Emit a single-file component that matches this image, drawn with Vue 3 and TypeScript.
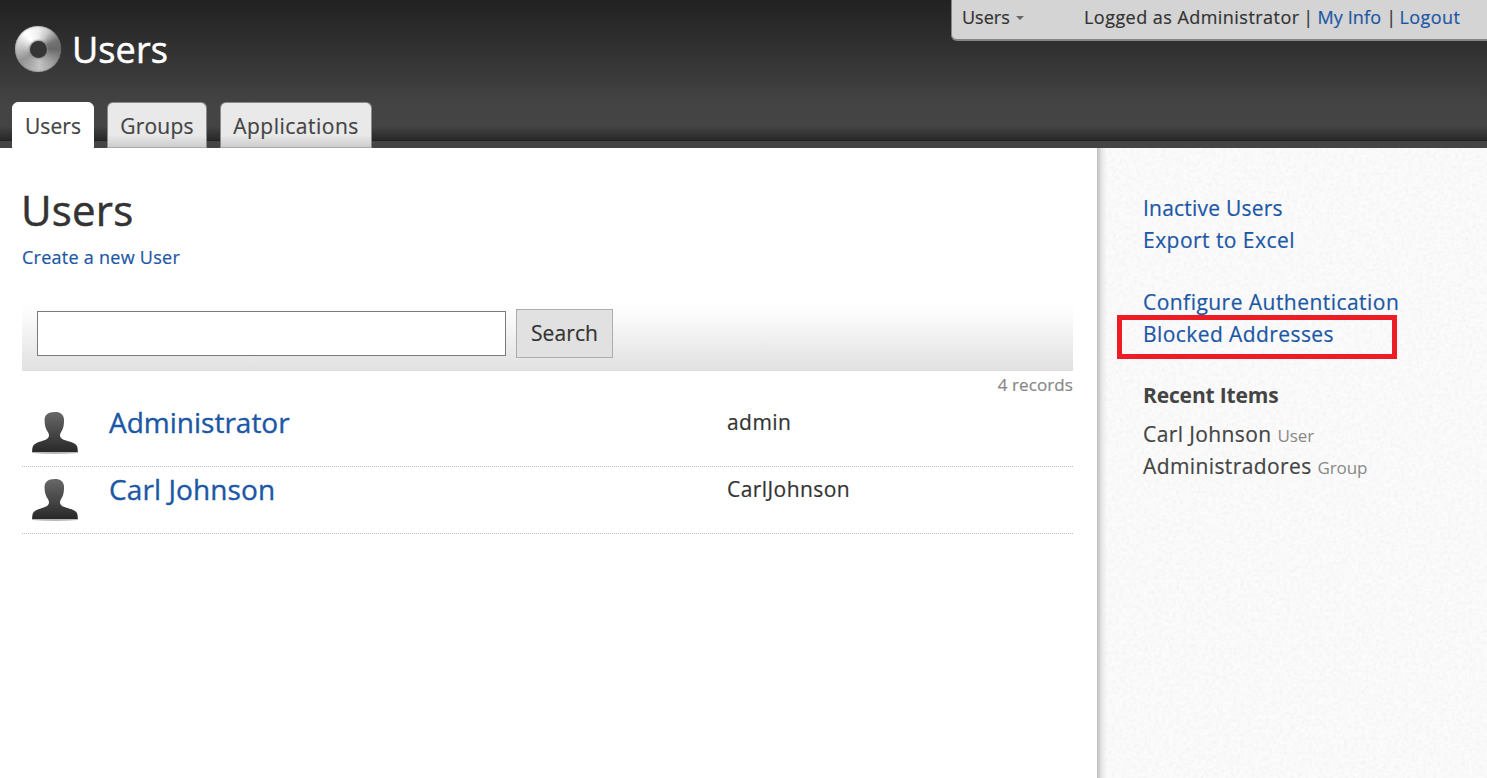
<script setup lang="ts">
interface Account { name: string; login: string; cls: string }
interface RecentItem { name: string; kind: string }

const tabs: string[] = ['Users', 'Groups', 'Applications']
const accounts: Account[] = [
  { name: 'Administrator', login: 'admin', cls: 'snug' },
  { name: 'Carl Johnson', login: 'CarlJohnson', cls: '' },
]
const linkGroups: string[][] = [
  ['Inactive Users', 'Export to Excel'],
  ['Configure Authentication', 'Blocked Addresses'],
]
const recent: RecentItem[] = [
  { name: 'Carl Johnson', kind: 'User' },
  { name: 'Administradores', kind: 'Group' },
]
</script>

<template>
  <div class="page">
    <header class="header">
      <div class="brand">
        <div class="ring"><div class="hole"></div></div>
        <span class="brand-name">Users</span>
      </div>
      <div class="userbar">
        <span class="switcher">Users</span>
        <svg class="caret" width="8" height="4" viewBox="0 0 8 4"><path d="M0 0H8L4 4Z" fill="#666" /></svg>
        <span class="session">Logged as Administrator<i>|</i><a class="info">My Info</a><i>|</i><a class="out">Logout</a></span>
      </div>
      <nav class="tabs">
        <a v-for="(tab, i) in tabs" :key="tab" class="tab" :class="['tab-' + i, { active: i === 0 }]">{{ tab }}</a>
      </nav>
    </header>

    <div class="body">
      <main class="main">
        <h1>Users</h1>
        <a class="create">Create a new User</a>
        <div class="searchbar">
          <input class="query" type="text" />
          <button class="go" type="button">Search</button>
        </div>
        <div class="count">4 records</div>
        <div v-for="a in accounts" :key="a.login" class="row">
          <svg class="avatar" width="50" height="48" viewBox="0 0 50 48">
            <defs>
              <linearGradient :id="'g' + a.login" x1="0" y1="0" x2="0" y2="1">
                <stop offset="0" stop-color="#686868" />
                <stop offset="1" stop-color="#292929" />
              </linearGradient>
            </defs>
            <path d="M2 41.5H48V43Q25 45 2 43Z" fill="#000" opacity=".28" />
            <path
              d="M24.5 2C30 1.7 33.7 4.2 34 9.5C34.2 15 33.4 19 30.8 22.6C29.8 25 29.8 26 30.5 27.2C32 30.5 39.5 30.8 44.3 33.4C47.3 35.1 47.8 37 47.8 42H2.2C2.2 37 2.7 35.1 5.7 33.4C10.5 30.8 17 30.5 18.5 27.2C19.2 26 19.2 25 18.2 22.6C15.6 19 14.4 15 14.6 9.5C14.8 4.4 18.5 2.2 24.5 2Z"
              :fill="'url(#g' + a.login + ')'"
            />
          </svg>
          <a class="name" :class="a.cls">{{ a.name }}</a>
          <span class="login">{{ a.login }}</span>
        </div>
      </main>

      <aside class="side">
        <svg class="grain" width="389" height="630">
          <filter id="grain" x="0" y="0" width="100%" height="100%">
            <feTurbulence type="fractalNoise" baseFrequency="0.28" numOctaves="3" seed="4" />
            <feColorMatrix type="matrix" values="0 0 0 0 0.8  0 0 0 0 0.8  0 0 0 0 0.8  0.7 0 0 0 -0.26" />
          </filter>
          <rect width="389" height="630" filter="url(#grain)" />
        </svg>
        <div class="side-content">
          <div v-for="(group, g) in linkGroups" :key="g" class="links">
            <a v-for="link in group" :key="link" :class="{ marked: link === 'Blocked Addresses', tight: link === 'Inactive Users' }">{{ link }}</a>
          </div>
          <h2>Recent Items</h2>
          <div v-for="item in recent" :key="item.name" class="recent">
            {{ item.name }} <small>{{ item.kind }}</small>
          </div>
        </div>
      </aside>
    </div>
  </div>
</template>

<style>
body { margin: 0; overflow: hidden; }
</style>

<style scoped>
.page {
  width: 1487px;
  height: 778px;
  display: flex;
  flex-direction: column;
  background: #fff;
  color: #333;
  font-family: "Open Sans", "Noto Sans", sans-serif;
  font-size: 21px;
  letter-spacing: 0.46px;
  -webkit-text-stroke: 0.2px;
}
a { color: #1c57a5; text-decoration: none; }
.header {
  box-sizing: border-box;
  height: 148px;
  flex: none;
  display: grid;
  grid-template: 102px 46px / 951px 536px;
  background:
    linear-gradient(#222, #222) 0 140px / 100% 1px no-repeat,
    linear-gradient(#444, #444) 0 141px / 100% 7px no-repeat,
    linear-gradient(#222 0, #252525 12px, #444 105px, #444 126px, #262626 141px);
}
.brand { display: flex; align-items: flex-start; padding: 26px 0 0 15px; }
.ring {
  width: 46px;
  height: 46px;
  border-radius: 50%;
  display: flex;
  align-items: center;
  justify-content: center;
  background: conic-gradient(from 0deg, #f0f0f0 0, #c8c8c8 30deg, #747474 65deg, #686868 90deg, #a0a0a0 135deg, #c4c4c4 175deg, #aaa 205deg, #949494 235deg, #c4c4c4 275deg, #fff 320deg, #f0f0f0 360deg);
  box-shadow: inset 0 0 2px #777, 0 0 1px #777;
}
.hole { width: 17px; height: 17px; border-radius: 50%; background: #353535; box-shadow: 0 0 2px 1px #888; }
.brand-name { margin: -1px 0 0 11px; font-size: 36px; line-height: 50px; letter-spacing: 0.1px; color: #fff; -webkit-text-stroke: 0.5px; }
.userbar {
  box-sizing: border-box;
  height: 41px;
  display: flex;
  align-items: flex-start;
  padding: 5px 0 0 10px;
  border: solid #858585;
  border-width: 0 0 2px 1px;
  border-bottom-left-radius: 6px;
  background: #d4d4d4;
  font-size: 18px;
  line-height: 25px;
  letter-spacing: 0.46px;
  white-space: nowrap;
}
.switcher { width: 54px; letter-spacing: 0; }
.caret { margin-top: 11px; }
.session { display: flex; margin-left: 60px; }
.session i { width: 18px; text-align: center; font-style: normal; }
.session .info { width: 65px; letter-spacing: 0.1px; }
.session .out { margin-left: -1px; letter-spacing: 0.4px; }
.tabs { grid-column: 1 / 3; display: flex; gap: 13px; padding-left: 12px; }
.tab {
  box-sizing: border-box;
  height: 46px;
  border: 1px solid #8a8a8a;
  border-bottom-color: #aaa;
  border-radius: 6px 6px 0 0;
  background: linear-gradient(#e9e9e9 0, #e9e9e9 32px, #cacaca 45px);
  color: #444;
  line-height: 46px;
  text-align: center;
}
.tab-0 { width: 82px; letter-spacing: 0.1px; }
.tab-1 { width: 100px; letter-spacing: 0.2px; }
.tab-2 { width: 152px; letter-spacing: 0.5px; }
.tab.active { background: #fff; border-color: #fff; }
.body { flex: 1; display: flex; }
.main { box-sizing: border-box; width: 1097px; padding: 32px 24px 0 22px; }
h1 { margin: 0 0 0 -1px; font-size: 42px; line-height: 60px; font-weight: 400; letter-spacing: 0.2px; -webkit-text-stroke: 0.5px; }
.create { display: block; margin-top: 4px; font-size: 18px; line-height: 26px; letter-spacing: 0.26px; }
.searchbar {
  box-sizing: border-box;
  height: 71px;
  margin-top: 30px;
  padding: 9px 0 0 15px;
  display: flex;
  gap: 10px;
  background: linear-gradient(#fff, #fafafa 25%, #e0e0e0);
}
.query { box-sizing: border-box; width: 469px; height: 45px; margin: 2px 0 0; border: 1px solid #7a7a7a; background: #fff; }
.go {
  box-sizing: border-box;
  width: 97px;
  height: 49px;
  padding: 0 0 1px;
  border: 1px solid #adadad;
  background: #e1e1e1;
  color: #333;
  font: inherit;
  letter-spacing: 0.1px;
}
.count { height: 29px; line-height: 28px; text-align: right; font-size: 17px; letter-spacing: 0.1px; color: #888; }
.row { box-sizing: border-box; height: 67px; display: flex; border-bottom: 1px dotted #bbb; }
.avatar { margin: 10px 29px 0 8px; flex: none; }
.name { width: 618px; font-size: 28px; line-height: 44px; letter-spacing: 0.1px; -webkit-text-stroke: 0.35px; }
.name.snug { letter-spacing: 0; }
.login { line-height: 45px; letter-spacing: 0.44px; }
.side { position: relative; width: 389px; margin-left: 1px; background: #fbfbfb; }
.grain { position: absolute; inset: 0; display: block; }
.side-content {
  position: relative;
  box-sizing: border-box;
  height: 100%;
  margin-left: -1px;
  padding: 45px 0 0 46px;
  background: linear-gradient(90deg, #bebebe 0, #cecece 2px, rgba(225, 225, 225, 0.7) 5px, rgba(250, 250, 250, 0) 10px);
}
.links { display: flex; flex-direction: column; align-items: flex-start; margin-bottom: 31px; line-height: 31.5px; }
.tight { letter-spacing: 0.22px; }
.marked { position: relative; letter-spacing: 0.42px; }
.marked::after {
  content: "";
  position: absolute;
  box-sizing: border-box;
  left: -26px;
  top: -4px;
  width: 280px;
  height: 44px;
  border: 5px solid #ee1c24;
}
h2 { margin: -2px 0 7px; font-size: 21px; line-height: 32px; letter-spacing: -0.15px; font-weight: 700; color: #444; -webkit-text-stroke: 0; }
.recent { height: 32px; line-height: 32px; color: #444; white-space: nowrap; letter-spacing: 0.4px; }
.recent small { font-size: 17px; line-height: 1; letter-spacing: -0.1px; color: #888; -webkit-text-stroke: 0; }
</style>
